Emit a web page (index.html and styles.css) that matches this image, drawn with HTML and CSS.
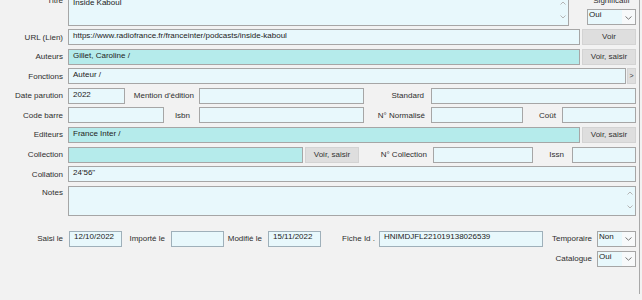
FILE: index.html
```html
<!DOCTYPE html>
<html lang="fr">
<head>
    <meta charset="UTF-8">
    <title>Fiche</title>
    <link rel="stylesheet" href="styles.css">
</head>
<body>
    <div class="fiche">
        <div class="titre-row">
            <div class="lbl lbl-main lbl-top">Titre</div>
            <div class="fld area area-titre">
                <div class="area-text">Inside Kaboul</div>
                <div class="scroll">
                    <svg width="6" height="4" viewBox="0 0 6 4"><path d="M0.5 3.5 L3 1 L5.5 3.5" fill="none" stroke="#b4b4b4"/></svg>
                    <svg width="6" height="4" viewBox="0 0 6 4"><path d="M0.5 0.5 L3 3 L5.5 0.5" fill="none" stroke="#b4b4b4"/></svg>
                </div>
            </div>
            <div class="signif">
                <div class="signif-lbl">Significatif</div>
                <div class="sel">
                    <span class="sel-val">Oui</span>
                    <span class="sel-arrow"><svg width="7" height="4" viewBox="0 0 7 4"><path d="M0.5 0.5 L3.5 3.2 L6.5 0.5" fill="none" stroke="#777"/></svg></span>
                </div>
            </div>
        </div>

        <div class="rows">
            <div class="row">
                <div class="lbl lbl-main">URL (Lien)</div>
                <div class="fld f-long">https://www.radiofrance.fr/franceinter/podcasts/inside-kaboul</div>
                <div class="btn btn-side">Voir</div>
            </div>
            <div class="row">
                <div class="lbl lbl-main">Auteurs</div>
                <div class="fld teal f-long">Gillet, Caroline /</div>
                <div class="btn btn-side">Voir, saisir</div>
            </div>
            <div class="row">
                <div class="lbl lbl-main">Fonctions</div>
                <div class="fld f-fonctions">Auteur /</div>
                <div class="btn btn-more">&gt;</div>
            </div>
            <div class="row">
                <div class="lbl lbl-main">Date parution</div>
                <div class="fld f-date">2022</div>
                <div class="lbl l-mention">Mention d'édition</div>
                <div class="fld f-mid"></div>
                <div class="lbl l-standard">Standard</div>
                <div class="fld f-standard"></div>
            </div>
            <div class="row">
                <div class="lbl lbl-main">Code barre</div>
                <div class="fld f-code"></div>
                <div class="lbl l-isbn">Isbn</div>
                <div class="fld f-mid"></div>
                <div class="lbl l-normalise">N° Normalisé</div>
                <div class="fld f-normalise"></div>
                <div class="lbl l-cout">Coût</div>
                <div class="fld f-cout"></div>
            </div>
            <div class="row">
                <div class="lbl lbl-main">Editeurs</div>
                <div class="fld teal f-long">France Inter /</div>
                <div class="btn btn-side">Voir, saisir</div>
            </div>
            <div class="row">
                <div class="lbl lbl-main">Collection</div>
                <div class="fld teal f-collection"></div>
                <div class="btn btn-side">Voir, saisir</div>
                <div class="lbl l-ncollection">N° Collection</div>
                <div class="fld f-ncollection"></div>
                <div class="lbl l-issn">Issn</div>
                <div class="fld f-issn"></div>
            </div>
            <div class="row">
                <div class="lbl lbl-main">Collation</div>
                <div class="fld f-full">24'56"</div>
            </div>
            <div class="row row-notes">
                <div class="lbl lbl-main lbl-top">Notes</div>
                <div class="fld area area-notes">
                    <div class="area-text"></div>
                    <div class="scroll">
                        <svg width="6" height="4" viewBox="0 0 6 4"><path d="M0.5 3.5 L3 1 L5.5 3.5" fill="none" stroke="#b4b4b4"/></svg>
                        <svg width="6" height="4" viewBox="0 0 6 4"><path d="M0.5 0.5 L3 3 L5.5 0.5" fill="none" stroke="#b4b4b4"/></svg>
                    </div>
                </div>
            </div>
        </div>

        <div class="bottom">
            <div class="row">
                <div class="lbl l-saisi">Saisi le</div>
                <div class="fld fld-b f-jour">12/10/2022</div>
                <div class="lbl l-importe">Importé le</div>
                <div class="fld fld-b f-jour"></div>
                <div class="lbl l-modifie">Modifié le</div>
                <div class="fld fld-b f-jour">15/11/2022</div>
                <div class="lbl l-fiche">Fiche Id .</div>
                <div class="fld fld-b f-fiche">HNIMDJFL221019138026539</div>
                <div class="lbl l-temp">Temporaire</div>
                <div class="sel sel-small">
                    <span class="sel-val">Non</span>
                    <span class="sel-arrow"><svg width="7" height="4" viewBox="0 0 7 4"><path d="M0.5 0.5 L3.5 3.2 L6.5 0.5" fill="none" stroke="#777"/></svg></span>
                </div>
            </div>
            <div class="row row-right">
                <div class="lbl l-temp">Catalogue</div>
                <div class="sel sel-small">
                    <span class="sel-val">Oui</span>
                    <span class="sel-arrow"><svg width="7" height="4" viewBox="0 0 7 4"><path d="M0.5 0.5 L3.5 3.2 L6.5 0.5" fill="none" stroke="#777"/></svg></span>
                </div>
            </div>
        </div>
    </div>
</body>
</html>
```

FILE: styles.css
```css
* {
    box-sizing: border-box;
}
body {
    margin: 0;
    background-color: #f2f2f2;
    font-family: "Liberation Sans", Arial, sans-serif;
    font-size: 8px;
    color: #2e2e2e;
    overflow: hidden;
}
.fiche {
    width: 640px;
    height: 300px;
    border-right: 1px solid #a8a8a8;
}

/* title block, partly scrolled off the top */
.titre-row {
    display: flex;
    align-items: flex-start;
    height: 32px;
    margin-top: -6px;
}
.rows {
    display: flex;
    flex-direction: column;
    gap: 3.6px;
    margin-top: 3px;
}
.row {
    display: flex;
    align-items: center;
    height: 16px;
    flex-shrink: 0;
}
.row-notes {
    height: 30px;
    align-items: flex-start;
}
.bottom {
    display: flex;
    flex-direction: column;
    gap: 4px;
    margin-top: 15px;
}
.row-right {
    justify-content: flex-end;
    padding-right: 3px;
}

/* labels */
.lbl {
    flex-shrink: 0;
    text-align: right;
    padding-right: 5px;
    white-space: nowrap;
}
.lbl-main { width: 68px; }
.lbl-top { align-self: flex-start; padding-top: 2px; }
.titre-row .lbl-top { padding-top: 2px; line-height: 10px; }
.l-mention { width: 74px; }
.l-standard { width: 67px; padding-right: 7px; }
.l-isbn { width: 35px; padding-right: 9px; }
.l-normalise { width: 67px; padding-right: 6px; }
.l-cout { width: 39px; padding-right: 6px; }
.l-ncollection { width: 74px; padding-right: 6px; }
.l-issn { width: 39px; padding-right: 8px; }
.l-saisi { width: 69px; padding-right: 6px; }
.l-importe { width: 49px; padding-right: 6px; }
.l-modifie { width: 44px; padding-right: 6px; }
.l-fiche { width: 58px; padding-right: 4px; }
.l-temp { width: 54px; }

/* fields */
.fld {
    flex-shrink: 0;
    height: 16px;
    border: 1px solid #a6a6a6;
    background-color: #e8f8fc;
    padding: 1px 4px 0;
    white-space: nowrap;
    overflow: hidden;
    color: #222;
}
.teal {
    background-color: #b5ebeb;
}
.fld-b {
    border-color: #9fb0ba;
    padding-top: 0;
}
.f-long { width: 512px; }
.f-fonctions { width: 558px; }
.f-full { width: 568px; }
.f-date { width: 57px; }
.f-mid { width: 165px; }
.f-standard { width: 205px; }
.f-code { width: 96px; }
.f-normalise { width: 92px; }
.f-cout { width: 74px; }
.f-collection { width: 235px; }
.f-ncollection { width: 100px; }
.f-issn { width: 64px; }
.f-jour { width: 53px; }
.f-fiche { width: 164px; }

/* multi-line fields */
.area {
    display: flex;
    padding: 0;
}
.area-text {
    flex: 1;
    padding: 1px 4px 0;
}
.area-titre .area-text {
    padding-top: 3px;
}
.scroll {
    width: 11px;
    display: flex;
    flex-direction: column;
    justify-content: space-between;
    align-items: center;
    padding: 4px 0 6px;
}
.area-titre .scroll {
    padding-top: 6px;
}
.scroll svg {
    display: block;
}
.area-titre {
    width: 501px;
    height: 32px;
}
.area-notes {
    width: 568px;
    height: 30px;
}

/* buttons */
.btn {
    flex-shrink: 0;
    height: 16px;
    background-color: #dedede;
    border: 1px solid #d3d3d3;
    text-align: center;
    line-height: 14px;
    color: #333;
}
.btn-side {
    width: 54px;
    margin-left: 2px;
}
.btn-more {
    width: 9px;
    margin-left: 1px;
    font-size: 7px;
}

/* drop-down lists */
.signif {
    width: 49px;
    margin-left: 18px;
    display: flex;
    flex-direction: column;
    align-items: center;
}
.signif-lbl {
    line-height: 10px;
    height: 15px;
    padding-top: 2px;
}
.sel {
    width: 49px;
    height: 16px;
    display: flex;
    border: 1px solid #a6a6a6;
    background-color: #e8f8fc;
}
.sel-small {
    width: 39px;
}
.sel-val {
    flex: 1;
    padding-left: 1px;
    color: #222;
}
.sel-arrow {
    width: 13px;
    display: flex;
    align-items: center;
    justify-content: center;
    padding-top: 1px;
    background-color: #f7f9fa;
}
```
